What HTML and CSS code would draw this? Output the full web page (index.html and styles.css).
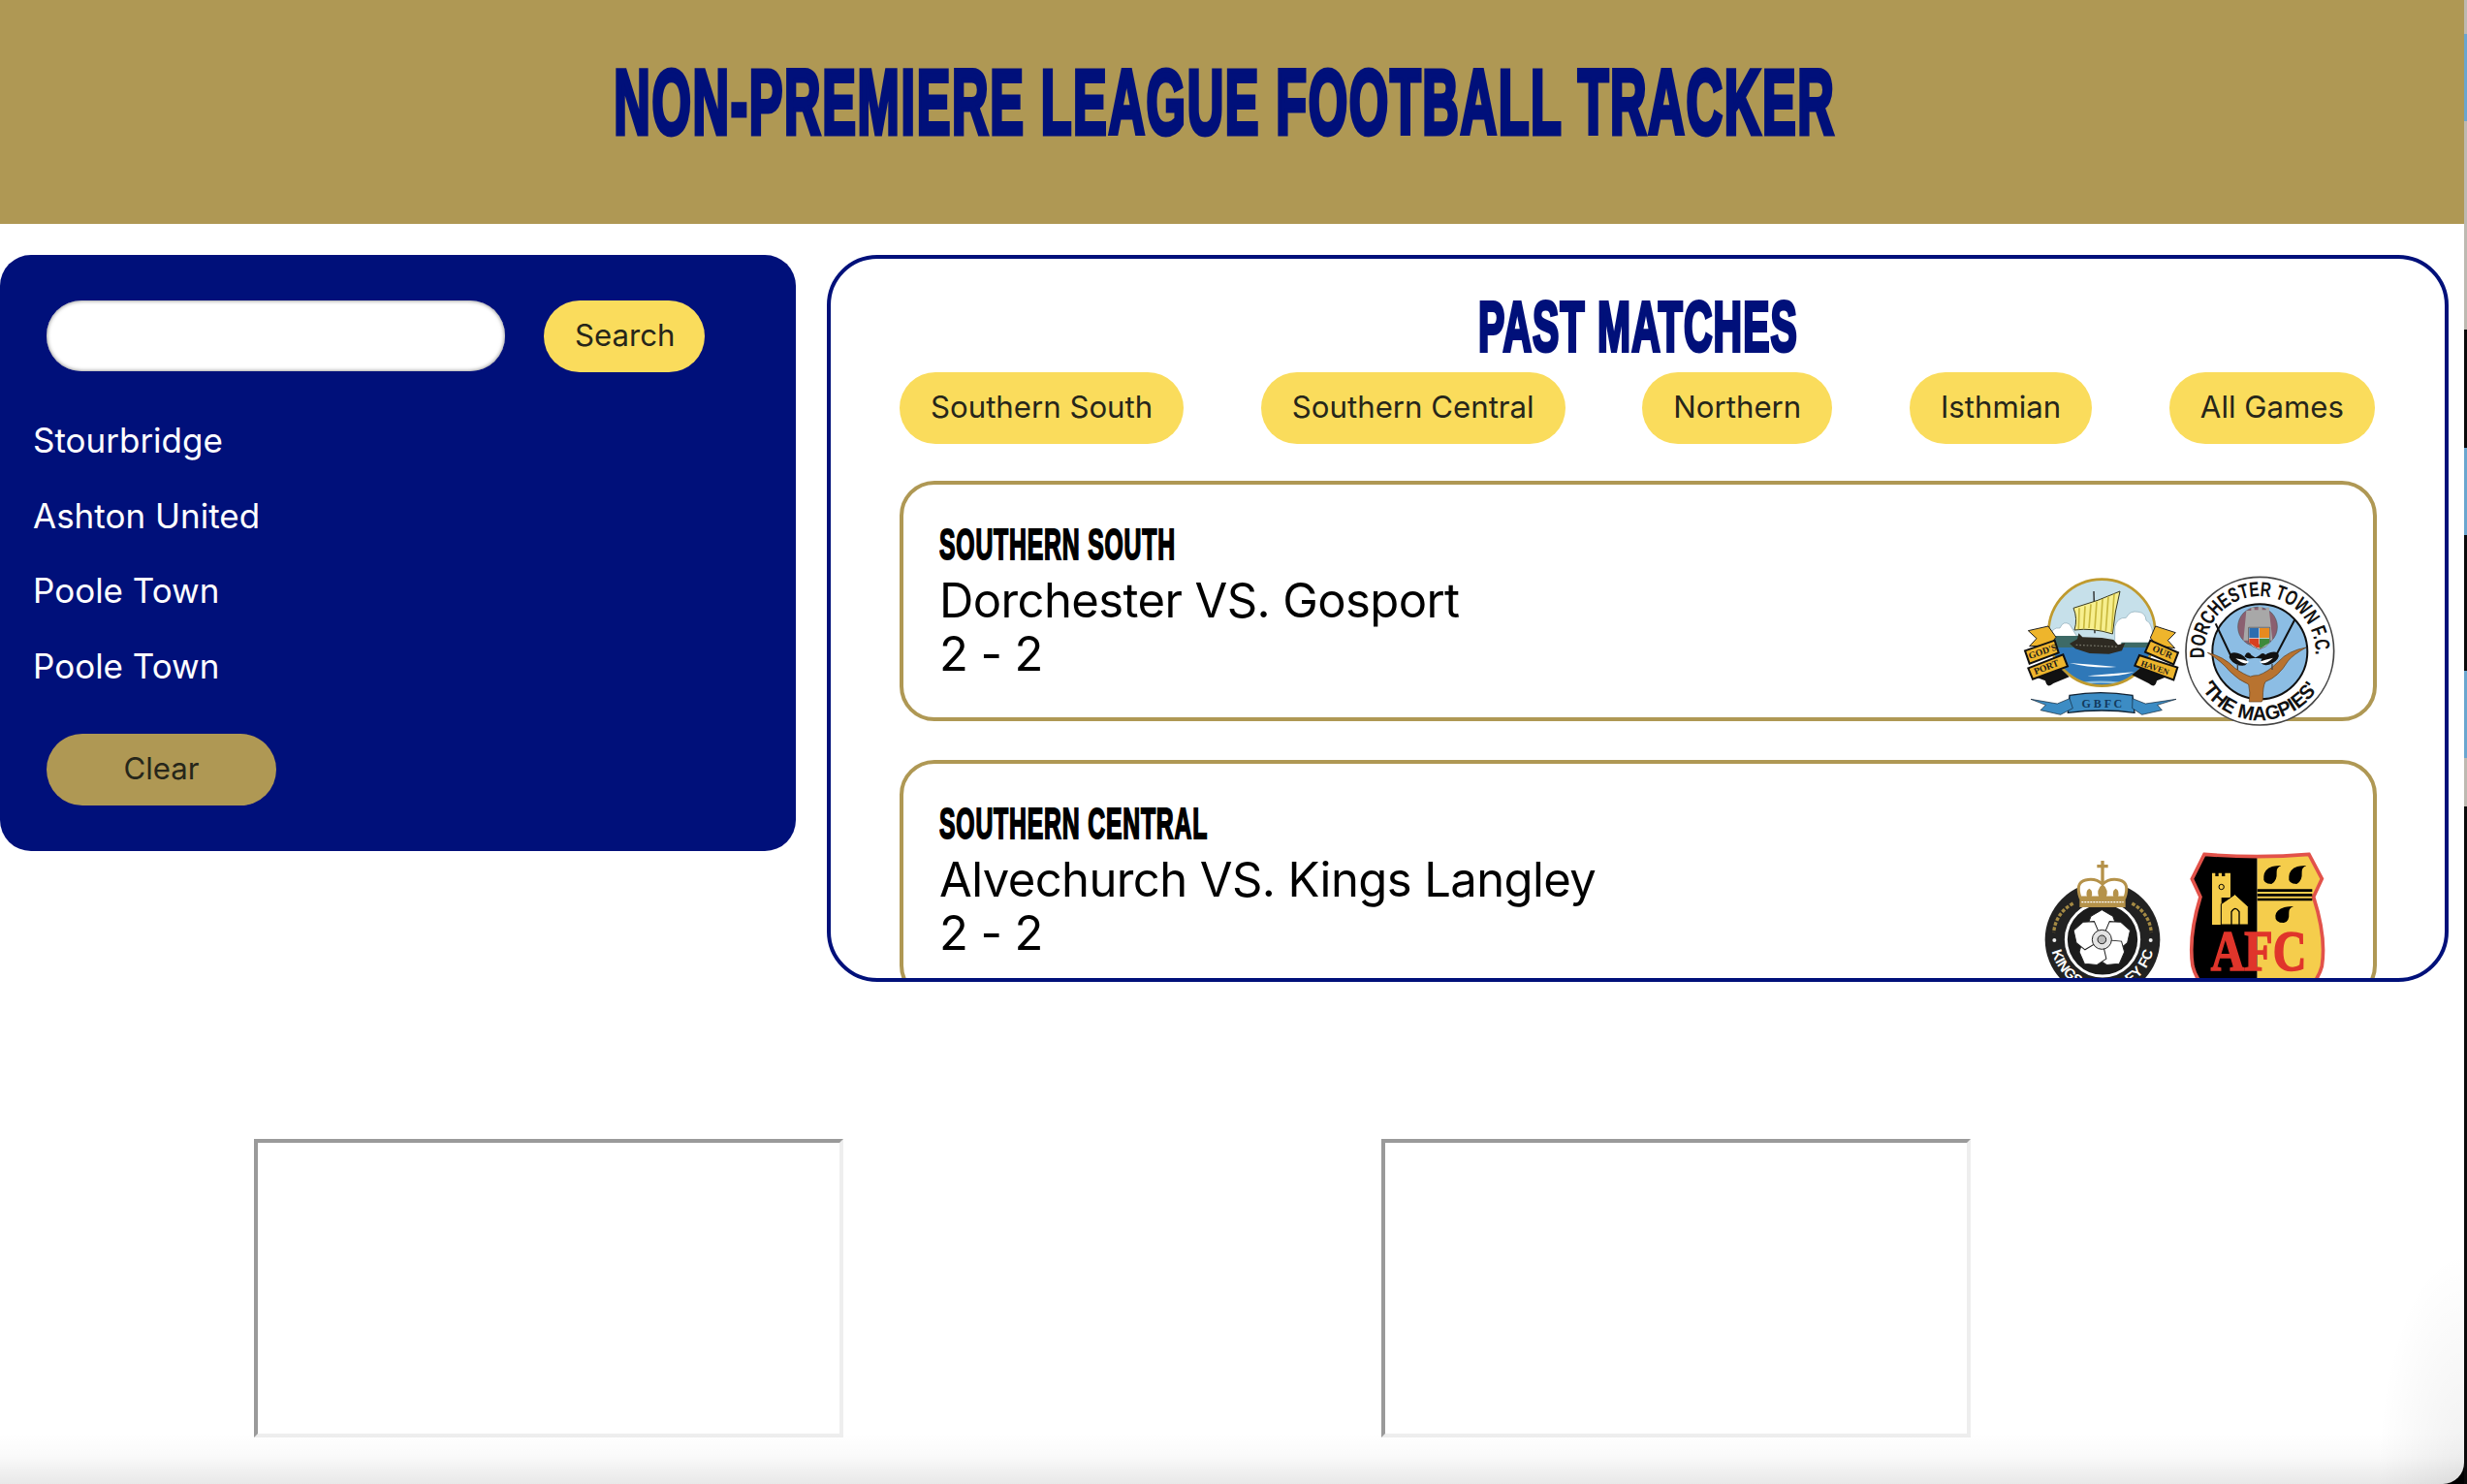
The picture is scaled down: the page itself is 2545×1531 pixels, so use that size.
FILE: index.html
```html
<!DOCTYPE html>
<html lang="en">
<head>
<meta charset="UTF-8">
<meta name="viewport" content="width=device-width, initial-scale=1.0">
<title>Non-Premiere League Football Tracker</title>
<link rel="stylesheet" href="styles.css">
</head>
<body>
<div class="page">
    <header class="site-header">
        <h1 class="site-title">Non-Premiere League Football Tracker</h1>
    </header>

    <div class="content">
        <aside class="sidebar">
            <form class="search-row">
                <input class="search-input" type="text">
                <button class="btn btn-yellow search-btn" type="button">Search</button>
            </form>
            <ul class="team-list">
                <li>Stourbridge</li>
                <li>Ashton United</li>
                <li>Poole Town</li>
                <li>Poole Town</li>
            </ul>
            <button class="btn btn-gold clear-btn" type="button">Clear</button>
        </aside>

        <main class="matches">
            <h2 class="matches-title">Past Matches</h2>
            <div class="filters">
                <button class="btn btn-yellow" type="button">Southern South</button>
                <button class="btn btn-yellow" type="button">Southern Central</button>
                <button class="btn btn-yellow" type="button">Northern</button>
                <button class="btn btn-yellow" type="button">Isthmian</button>
                <button class="btn btn-yellow" type="button">All Games</button>
            </div>

            <article class="match-card">
                <div class="match-info">
                    <h3 class="match-league">Southern South</h3>
                    <p class="match-teams">Dorchester VS. Gosport</p>
                    <p class="match-score">2 - 2</p>
                </div>
                <div class="match-logos">
                    <!-- gosport badge -->
                    <svg class="logo" viewBox="12 0 480 480">
                        <defs><clipPath id="gosportClip"><circle cx="250" cy="188" r="163"/></clipPath></defs>
                        <circle cx="250" cy="188" r="165" fill="#c6e0ea"/>
                        <g clip-path="url(#gosportClip)">
                            <path d="M290 170q8-30 35-28 12-24 38-18 22 2 24 26 24 8 22 80H290z" fill="#fff" stroke="#8aa8b5" stroke-width="2"/>
                            <path d="M90 200q6-30 30-26 10-24 30-12l30 50H90z" fill="#fff" stroke="#8aa8b5" stroke-width="2"/>
                            <path d="M85 198h100v36H85zM310 218h110v26H310z" fill="#3d6a66"/>
                            <rect x="80" y="234" width="340" height="130" fill="#2f78b8"/>
                            <path d="M150 282q70 4 145 12-70 6-145-12zM205 322q70-6 145-12-60 18-145 12z" fill="#fff"/>
                            <path d="M190 345q50-8 120 0" stroke="#8fc0de" stroke-width="7" fill="none"/>
                        </g>
                        <path d="M225 60l3 130" stroke="#222" stroke-width="4"/>
                        <path d="M162 112Q240 90 306 60 290 120 283 192 220 172 165 180 176 145 162 112z" fill="#f7ef8e" stroke="#3a3a20" stroke-width="3"/>
                        <path d="M180 112l-2 66M198 106l-4 70M216 100l-6 74M234 92l-6 84M252 84l-6 96M270 76l-8 108M288 68l-8 118" stroke="#c9b93e" stroke-width="5" fill="none"/>
                        <path d="M150 222l24-14 4-18 12 12 60 2 36 6 14 16 22-6-10 24-40 10-60-2-44-14z" fill="#2e2a22"/>
                        <path d="M170 226l130 6" stroke="#77776a" stroke-width="4" stroke-dasharray="5 6"/>
                        <circle cx="250" cy="188" r="165" fill="none" stroke="#bf9a2e" stroke-width="8"/>
                        <path d="M100 345q-20 18-25-8l-42-16 60-50 56 54z" fill="#111"/>
                        <path d="M395 345q20 18 25-8l45-18-60-50-62 50z" fill="#111"/>
                        <path d="M22 182l62-14 24 34-20 26-62 2 22-24z" fill="#eeb52c" stroke="#222" stroke-width="3"/>
                        <path d="M478 188l-62-20-16 36 22 24 54 8-22-24z" fill="#eeb52c" stroke="#222" stroke-width="3"/>
                        <path d="M12 244l92-32 12 38-90 34z" fill="#eeb52c" stroke="#111" stroke-width="6"/>
                        <path d="M22 298l108-42 14 36-108 40z" fill="#eeb52c" stroke="#111" stroke-width="6"/>
                        <path d="M400 212l86 38-14 36-88-38z" fill="#eeb52c" stroke="#111" stroke-width="6"/>
                        <path d="M366 258l118 38-12 38-120-44z" fill="#eeb52c" stroke="#111" stroke-width="6"/>
                        <text class="logo-serif" font-size="29" transform="translate(27 270) rotate(-19)">GOD'S</text>
                        <text class="logo-serif" font-size="29" transform="translate(44 318) rotate(-21)">PORT</text>
                        <text class="logo-serif" font-size="29" transform="translate(404 244) rotate(23)">OUR</text>
                        <text class="logo-serif" font-size="26" transform="translate(369 290) rotate(19)">HAVEN</text>
                        <path d="M150 382q95-16 195 0l6 54q-100-14-206 0z" fill="#3c8cc4" stroke="#123" stroke-width="4"/>
                        <path d="M150 392l-38 16-82-14 46 18-16 16 62 14 38-20zM345 392l40 16 95-14-58 18 14 16-62 14-30-20z" fill="#3c8cc4" stroke="#123" stroke-width="2"/>
                        <text class="logo-serif gosport-letters" x="250" y="419" font-size="36" text-anchor="middle">G B F C</text>
                    </svg>
                    <!-- dorchester badge -->
                    <svg class="logo" viewBox="0 0 480 480">
                        <defs>
                            <path id="dorchTop" d="M76 266A172 172 0 1 1 418 266"/>
                            <path id="dorchBottom" d="M63 353A212 212 0 0 0 431 353"/>
                        </defs>
                        <circle cx="247" cy="245" r="229" fill="#fff" stroke="#444" stroke-width="5"/>
                        <circle cx="247" cy="247" r="147" fill="#8cbde4" stroke="#111" stroke-width="6"/>
                        <text class="logo-narrow" font-size="64"><textPath href="#dorchTop" textLength="568" lengthAdjust="spacingAndGlyphs">DORCHESTER TOWN F.C.</textPath></text>
                        <text class="logo-narrow" font-size="62"><textPath href="#dorchBottom" textLength="440" lengthAdjust="spacingAndGlyphs">'THE MAGPIES'</textPath></text>
                        <circle cx="240" cy="170" r="61" fill="#8b5f70" stroke="#555" stroke-width="2"/>
                        <path d="M205 120h15v-10h10v8h12v-10h12v10h12v-8h10v12l10 90h-90z" fill="#a8a8a8"/>
                        <path d="M212 172h66v46q-8 14-33 22-25-8-33-22z" fill="#e0e8f0" stroke="#333" stroke-width="2"/>
                        <path d="M214 174h30v30h-30z" fill="#2d6db0"/>
                        <path d="M246 174h30v30h-30z" fill="#e88a1f"/>
                        <path d="M214 206h30v16l8 14-16-2-22-14z" fill="#d8401f"/>
                        <path d="M246 206h30v14l-22 14-8 2z" fill="#3f8a3c"/>
                        <path d="M85 250q50 12 85 48 28 20 48 26 8-4 24-4 30-10 62-42 30-34 86-44-40 22-56 42-30 50-70 64-8 14-8 52 0 8-4 10h-38q4-30-2-54-30-12-58-40-24-30-69-58z" fill="#b87330" stroke="#5c3a18" stroke-width="2"/>
                        <path d="M110 160l52 110M355 148l-62 118" stroke="#111" stroke-width="6"/>
                        <ellipse cx="180" cy="270" rx="30" ry="17" transform="rotate(28 180 270)" fill="#111"/>
                        <ellipse cx="278" cy="268" rx="30" ry="17" transform="rotate(-28 278 268)" fill="#111"/>
                        <path d="M172 268q28 24 42 10l-18-6zM288 266q-28 26-42 12l18-6z" fill="#fff"/>
                        <path d="M205 252q10-6 16 6l14 8-14 2q-14 2-22-6zM262 254q-8-6-16 4l-14 8 14 2q14 2 22-6z" fill="#111"/>
                        <path d="M178 285v18M285 285v18" stroke="#444" stroke-width="4"/>
                    </svg>
                </div>
            </article>

            <article class="match-card">
                <div class="match-info">
                    <h3 class="match-league">Southern Central</h3>
                    <p class="match-teams">Alvechurch VS. Kings Langley</p>
                    <p class="match-score">2 - 2</p>
                </div>
                <div class="match-logos">
                    <!-- kings langley badge -->
                    <svg class="logo" viewBox="147 54 480 480">
                        <defs><path id="kingsArc" d="M226 328A161 161 0 0 0 548 328"/></defs>
                        <circle cx="387" cy="328" r="178" fill="#222"/>
                        <circle cx="387" cy="328" r="113" fill="#1b1b1b" stroke="#fff" stroke-width="9"/>
                        <circle cx="238" cy="330" r="6" fill="#eee"/>
                        <circle cx="536" cy="330" r="6" fill="#eee"/>
                        <text class="logo-arc kings-text" font-size="44"><textPath href="#kingsArc" startOffset="50%" text-anchor="middle">KINGS LANGLEY FC</textPath></text>
                        <g fill="#fff" stroke="#222" stroke-width="3">
                            <path transform="translate(385 328)" d="M0 0L-46-40-34-72 0-92 34-72 46-40z"/>
                            <path transform="translate(385 328) rotate(72)" d="M0 0L-46-40-34-72 0-92 34-72 46-40z"/>
                            <path transform="translate(385 328) rotate(144)" d="M0 0L-46-40-34-72 0-92 34-72 46-40z"/>
                            <path transform="translate(385 328) rotate(216)" d="M0 0L-46-40-34-72 0-92 34-72 46-40z"/>
                            <path transform="translate(385 328) rotate(288)" d="M0 0L-46-40-34-72 0-92 34-72 46-40z"/>
                            <circle cx="385" cy="328" r="30" fill="#e4e4e4"/>
                            <circle cx="385" cy="328" r="13" fill="#bbb"/>
                        </g>
                        <g fill="none" stroke="#a58a44" stroke-width="10" stroke-dasharray="11 5">
                            <path d="M296 216q-54 30-60 90"/>
                            <path d="M478 216q54 30 60 90"/>
                        </g>
                        <path d="M318 198q-16-46 16-54 30-8 53 12 23-20 53-12 32 8 16 54z" fill="#fff" stroke="#b5924a" stroke-width="9"/>
                        <path d="M340 198q-8-20 6-28 14 8 6 28zM376 198q-10-24 11-42 21 18 11 42zM422 198q-8-20 6-28 14 8 6 28z" fill="#b5924a"/>
                        <rect x="316" y="196" width="142" height="32" fill="#b5924a"/>
                        <path d="M322 212h130" stroke="#fff" stroke-width="4" stroke-dasharray="6 3"/>
                        <path d="M382 84h10v12h12v10h-12v46h-10v-46h-12v-10h12z" fill="#b5924a"/>
                    </svg>
                    <!-- alvechurch badge -->
                    <svg class="logo" viewBox="627 54 480 480">
                        <defs>
                            <clipPath id="afcClip"><path d="M702 64Q865 78 1026 64L1066 140 1040 196Q1080 320 1066 410 1040 510 866 572 690 510 666 410 652 320 690 196L664 140z"/></clipPath>
                        </defs>
                        <rect x="650" y="50" width="216" height="530" fill="#000" clip-path="url(#afcClip)"/>
                        <rect x="866" y="50" width="216" height="530" fill="#f5cd4c" clip-path="url(#afcClip)"/>
                        <path d="M702 64Q865 78 1026 64L1066 140 1040 196Q1080 320 1066 410 1040 510 866 572 690 510 666 410 652 320 690 196L664 140z" fill="none" stroke="#e2524a" stroke-width="11"/>
                        <path d="M726 122h10v10h10v-10h10v10h10v-10h17v76l-28 0v84h-29z" fill="#f5cd4c"/>
                        <circle cx="755" cy="165" r="8" fill="none" stroke="#000" stroke-width="3"/>
                        <path d="M754 282v-64l43-30 41 38v56z" fill="#f5cd4c" stroke="#000" stroke-width="3"/>
                        <path d="M786 282v-40q12-20 24 0v40" fill="none" stroke="#000" stroke-width="4"/>
                        <path d="M866 172h170v8H866zM866 186h170v8H866zM866 200h170v8H866z" fill="#000"/>
                        <path d="M912 102q28-4 28-2-14 4-14 18 2 30-16 38-28 0-24-24 2-22 26-30zM990 102q28-4 28-2-14 4-14 18 2 30-16 38-28 0-24-24 2-22 26-30zM950 228q28-4 28-2-14 4-14 18 2 30-16 32-28 0-26-22 2-18 28-26z" fill="#000"/>
                        <text class="logo-afc" x="870" y="422" font-size="178" text-anchor="middle" textLength="296" lengthAdjust="spacingAndGlyphs">AFC</text>
                    </svg>
                </div>
            </article>
        </main>
    </div>

    <div class="map-row">
        <div class="map-frame"></div>
        <div class="map-frame"></div>
    </div>

    <div class="window-shade"></div>
</div>

<!-- bit of the desktop showing past the browser window -->
<div class="desktop-strip">
    <span class="strip-gray strip-h35"></span>
    <span class="strip-blue strip-h90"></span>
    <span class="strip-gray strip-h215"></span>
    <span class="strip-black strip-h122"></span>
    <span class="strip-blue strip-h90"></span>
    <span class="strip-black strip-h140"></span>
    <span class="strip-blue strip-h90"></span>
    <span class="strip-gray strip-h50"></span>
    <span class="strip-black strip-fill"></span>
</div>
</body>
</html>
```

FILE: styles.css
```css
* {
    box-sizing: border-box;
}
html, body {
    margin: 0;
    height: 1531px;
    overflow: hidden;
}
body {
    display: flex;
    background-color: #000;
    font-family: Inter, "Liberation Sans", sans-serif;
}
.page {
    position: relative;
    width: 2542px;
    height: 1531px;
    overflow: hidden;
    background-color: #fff;
    border-bottom-right-radius: 22px;
}

/* header */
.site-header {
    height: 231px;
    padding: 51px 15px 0 0;
    background-color: #af9854;
    text-align: center;
}
.site-title {
    display: inline-block;
    margin: 0;
    font-family: "Liberation Sans Narrow", "Liberation Sans", sans-serif;
    font-size: 94px;
    line-height: 110px;
    font-weight: 700;
    letter-spacing: 3px;
    color: #00107a;
    text-transform: uppercase;
    white-space: nowrap;
    -webkit-text-stroke: 5px #00107a;
    transform: scaleX(0.553);
}

/* main row */
.content {
    display: flex;
    gap: 32px;
    padding-top: 32px;
    align-items: flex-start;
}
.sidebar {
    width: 821px;
    height: 615px;
    padding-top: 47px;
    border-radius: 32px;
    background-color: #00107a;
}
.search-row {
    display: flex;
    gap: 40px;
    margin: 0;
    padding-left: 48px;
}
.search-input {
    width: 473px;
    height: 73px;
    border: none;
    border-radius: 36px;
    background-color: #fff;
    box-shadow: inset 0 0 4px #777;
}
.btn {
    height: 74px;
    padding: 0 32px 3px;
    border: none;
    border-radius: 37px;
    font-family: Inter, "Liberation Sans", sans-serif;
    font-size: 31.2px;
    color: #26261a;
}
.btn-yellow {
    background-color: #fadc5c;
}
.btn-gold {
    background-color: #af9854;
}
.search-btn {
    width: 166px;
}
.team-list {
    margin: 32px 0 31px;
    padding: 0 0 0 34px;
    list-style: none;
    font-size: 35px;
    line-height: 77.6px;
    color: #fff;
}
.clear-btn {
    width: 237px;
    margin-left: 48px;
}

/* matches panel */
.matches {
    width: 1673px;
    height: 750px;
    padding: 0 70px 0 71px;
    overflow: hidden;
    border: 4px solid #00107a;
    border-radius: 52px;
}
.matches-title {
    height: 117px;
    margin: 0;
    padding-top: 32px;
    font-family: "Liberation Sans Narrow", "Liberation Sans", sans-serif;
    font-size: 73px;
    line-height: 76px;
    font-weight: 700;
    letter-spacing: 2px;
    color: #00107a;
    text-align: center;
    text-transform: uppercase;
    white-space: nowrap;
    -webkit-text-stroke: 4px #00107a;
    transform: scaleX(0.56);
}
.filters {
    display: flex;
    justify-content: space-between;
    margin: 0 2px 38px 0;
}
.match-card {
    display: flex;
    justify-content: space-between;
    height: 248px;
    margin-bottom: 40px;
    padding: 0 39px 0 37px;
    border: 4px solid #af9854;
    border-radius: 36px;
}
.match-info {
    padding-top: 36px;
}
.match-league {
    margin: 0;
    font-family: "Liberation Sans Narrow", "Liberation Sans", sans-serif;
    font-size: 45px;
    line-height: 52px;
    font-weight: 700;
    letter-spacing: 1.5px;
    color: #000;
    text-transform: uppercase;
    white-space: nowrap;
    -webkit-text-stroke: 2px #000;
    transform: scaleX(0.55);
    transform-origin: left center;
}
.match-teams,
.match-score {
    margin: 0;
    font-size: 49px;
    line-height: 55px;
    letter-spacing: -0.6px;
    color: #000;
}
.match-teams {
    padding-top: 4px;
}
.match-logos {
    display: flex;
    height: 160px;
    margin-top: 90px;
}
.logo {
    display: block;
    width: 160px;
    height: 160px;
    overflow: visible;
}
.logo-serif {
    font-family: "Liberation Serif", serif;
    font-weight: 700;
    fill: #1a1a1a;
}
.gosport-letters {
    fill: #123a5c;
}
.logo-arc {
    font-family: "Liberation Sans", sans-serif;
    font-weight: 700;
    fill: #111;
}
.logo-narrow {
    font-family: "Liberation Sans Narrow", "Liberation Sans", sans-serif;
    font-weight: 700;
    fill: #111;
}
.kings-text {
    fill: #fff;
}
.logo-afc {
    font-family: "Liberation Serif", serif;
    font-weight: 700;
    fill: #e0352b;
    stroke: #e0352b;
    stroke-width: 5px;
}

/* the two empty frames under the panels */
.map-row {
    display: flex;
    gap: 555px;
    padding: 162px 0 0 262px;
}
.map-frame {
    width: 608px;
    height: 308px;
    border: 4px solid;
    border-color: #9a9a9a #eeeeee #eeeeee #9a9a9a;
}

.window-shade {
    position: absolute;
    left: 0;
    right: 0;
    bottom: 0;
    height: 240px;
    pointer-events: none;
    background:
        radial-gradient(ellipse 90px 240px at 100% 100%, rgba(0, 0, 0, 0.06), rgba(0, 0, 0, 0) 100%),
        linear-gradient(to bottom, rgba(0, 0, 0, 0) 78%, rgba(0, 0, 0, 0.02) 88%, rgba(0, 0, 0, 0.09) 100%);
}

/* desktop strip on the right edge */
.desktop-strip {
    display: flex;
    flex-direction: column;
    width: 3px;
    height: 1531px;
}
.strip-gray { background-color: #bdb9b1; }
.strip-blue { background-color: #6aa6cf; }
.strip-black { background-color: #0a0a0a; }
.strip-h35 { height: 35px; }
.strip-h50 { height: 50px; }
.strip-h90 { height: 90px; }
.strip-h122 { height: 122px; }
.strip-h140 { height: 140px; }
.strip-h215 { height: 215px; }
.strip-fill { flex: 1; }
```
